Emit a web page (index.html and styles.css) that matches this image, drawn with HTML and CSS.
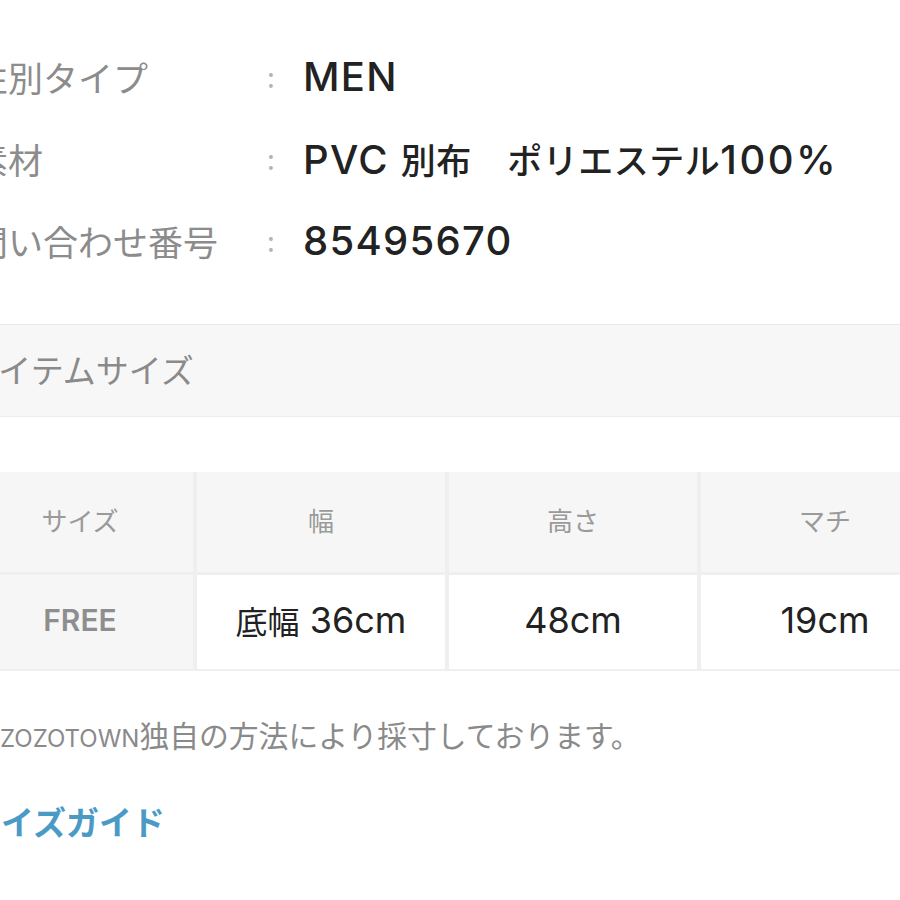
FILE: index.html
```html
<!DOCTYPE html>
<html lang="ja">
<head>
<meta charset="utf-8">
<link rel="stylesheet" href="styles.css">
</head>
<body>
<div class="page">
  <div class="spec">
    <div class="spec-row"><span class="spec-label">性別タイプ</span><span class="spec-colon">:</span><span class="spec-value">MEN</span></div>
    <div class="spec-row"><span class="spec-label">素材</span><span class="spec-colon">:</span><span class="spec-value">PVC <span class="ja">別布　ポリエステル</span><span class="pct">100%</span></span></div>
    <div class="spec-row"><span class="spec-label">問い合わせ番号</span><span class="spec-colon">:</span><span class="spec-value">85495670</span></div>
  </div>
  <div class="section-bar">アイテムサイズ</div>
  <div class="size-table">
    <div class="cell head">サイズ</div>
    <div class="cell head">幅</div>
    <div class="cell head">高さ</div>
    <div class="cell head">マチ</div>
    <div class="cell size-name">FREE</div>
    <div class="cell data"><span class="ja">底幅</span>&nbsp;36cm</div>
    <div class="cell data">48cm</div>
    <div class="cell data">19cm</div>
  </div>
  <p class="note"><span class="note-mark">※</span>ZOZOTOWN<span class="ja">独自の方法により採寸しております。</span></p>
  <a class="guide" href="#">サイズガイド</a>
</div>
</body>
</html>
```

FILE: styles.css
```css
html, body {
  margin: 0;
  padding: 0;
  background: #ffffff;
}
body {
  width: 900px;
  height: 900px;
  overflow: hidden;
  font-family: "Noto Sans CJK JP", "Noto Sans", sans-serif;
}
.page {
  margin-left: -33px;
  width: 1020px;
}
.spec {
  padding-top: 35px;
}
.spec-row {
  display: flex;
  align-items: center;
  height: 82px;
}
.spec-label {
  width: 282px;
  padding-left: 6px;
  font-size: 35px;
  color: #8c8c8c;
  white-space: nowrap;
}
.spec-colon {
  width: 32px;
  text-align: center;
  font-size: 28px;
  color: #b4b4b4;
}
.spec-value {
  margin-left: 16px;
  font-family: Inter, "Noto Sans CJK JP", sans-serif;
  font-size: 40px;
  font-weight: 500;
  color: #222222;
  white-space: nowrap;
  letter-spacing: 1.3px;
}
.spec-value .ja {
  font-family: "Noto Sans CJK JP", sans-serif;
  font-size: 35px;
  letter-spacing: 0.5px;
}
.spec-value .pct {
  letter-spacing: 2.5px;
}
.section-bar {
  margin-top: 43px;
  height: 87px;
  padding-bottom: 4px;
  display: flex;
  align-items: center;
  background: #f7f7f7;
  border-top: 1px solid #e9e9e9;
  border-bottom: 1px solid #ededed;
  font-size: 33px;
  color: #8a8a8a;
}
.size-table {
  margin-top: 55px;
  display: grid;
  grid-template-columns: 226px 248px 248px 248px;
  grid-template-rows: 100px 94px;
  gap: 3px 4px;
  background: #efefef;
  padding-bottom: 2px;
  width: 982px;
}
.cell {
  display: flex;
  align-items: center;
  justify-content: center;
  background: #f6f6f6;
  padding-bottom: 6px;
  box-sizing: border-box;
}
.head {
  font-size: 26px;
  color: #9a9a9a;
}
.size-name {
  font-family: Inter, sans-serif;
  font-size: 30px;
  font-weight: 600;
  color: #8e8e8e;
  padding-bottom: 4px;
}
.data {
  background: #ffffff;
  font-family: Inter, "Noto Sans CJK JP", sans-serif;
  font-size: 36px;
  color: #222222;
  padding-bottom: 4px;
}
.data .ja {
  font-family: "Noto Sans CJK JP", sans-serif;
  font-size: 32px;
}
.note {
  margin: 42px 0 0 0;
  font-family: Inter, "Noto Sans CJK JP", sans-serif;
  font-size: 24px;
  line-height: 42px;
  color: #8a8a8a;
  white-space: nowrap;
}
.note .ja {
  font-family: "Noto Sans CJK JP", sans-serif;
  font-size: 29.8px;
}
.note-mark {
  display: inline-block;
  width: 33px;
}
.guide {
  display: block;
  margin-top: 37px;
  padding-left: 1px;
  font-size: 33px;
  line-height: 48px;
  font-weight: 700;
  color: #4a9ac6;
  text-decoration: none;
}
```
